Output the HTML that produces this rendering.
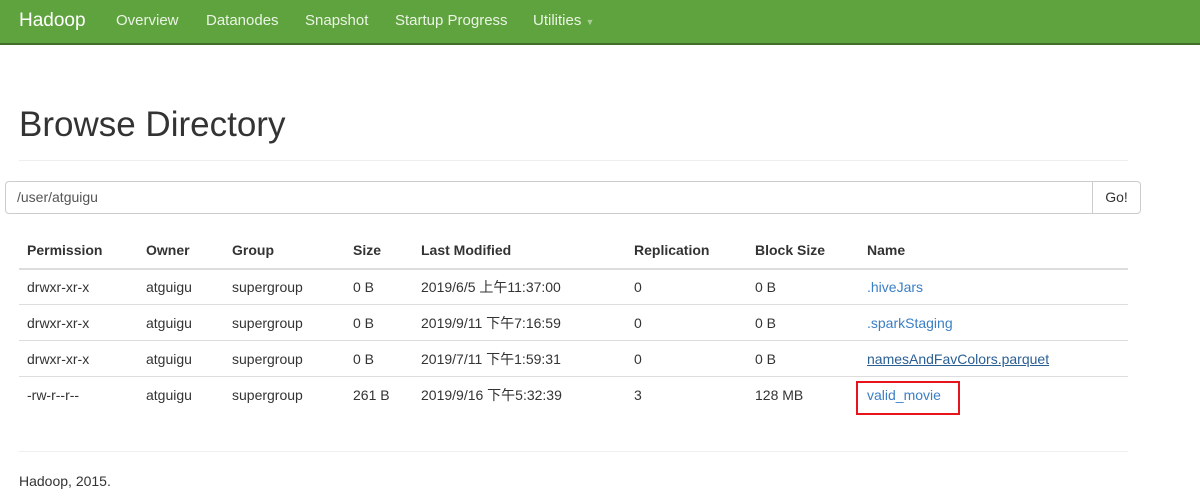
<!DOCTYPE html>
<html><head><meta charset="utf-8"><style>
*{box-sizing:border-box;margin:0;padding:0}
body{width:1200px;height:500px;background:#fff;font-family:"Liberation Sans","Noto Sans CJK SC",sans-serif;font-size:14px;color:#333;position:relative;overflow:hidden}
.nav{position:absolute;left:0;top:0;width:1200px;height:45px;background:#5fa33e;border-bottom:2px solid #3f6f2a}
.nav span{position:absolute;top:12px;color:#eaf4e4;font-size:15px}
.nav .brand{left:19px;top:10px;font-size:19px;color:#fff}
h1{position:absolute;left:19px;top:105px;font-size:35px;font-weight:normal;color:#333;line-height:40px}
.hr{position:absolute;height:1px;background:#eee}
.inp{position:absolute;left:5px;top:181px;width:1136px;height:33px;border:1px solid #ccc;border-radius:4px}
.inp .t{position:absolute;left:11px;top:7px;color:#555}
.inp .go{position:absolute;right:0;top:0;width:48px;height:31px;border-left:1px solid #ccc;text-align:center;line-height:31px;color:#333}
.c{position:absolute;white-space:nowrap;line-height:20px;height:20px}
.c span.z{display:inline-block;line-height:14px;vertical-align:baseline}
.b{font-weight:bold}
a{color:#3a7fc4;text-decoration:none}
.line{position:absolute;left:19px;width:1109px;height:1px;background:#ddd}
</style></head><body>
<div class="nav">
<span class="brand">Hadoop</span>
<span style="left:116px">Overview</span>
<span style="left:206px">Datanodes</span>
<span style="left:305px">Snapshot</span>
<span style="left:395px">Startup Progress</span>
<span style="left:533px">Utilities <span style="position:static;font-size:9px;color:#a9cc98">▼</span></span>
</div>
<h1>Browse Directory</h1>
<div class="hr" style="left:19px;top:160px;width:1109px"></div>
<div class="inp"><span class="t">/user/atguigu</span><span class="go">Go!</span></div>
<div class="c b" style="left:27px;top:240px">Permission</div>
<div class="c b" style="left:146px;top:240px">Owner</div>
<div class="c b" style="left:232px;top:240px">Group</div>
<div class="c b" style="left:353px;top:240px">Size</div>
<div class="c b" style="left:421px;top:240px">Last Modified</div>
<div class="c b" style="left:634px;top:240px">Replication</div>
<div class="c b" style="left:755px;top:240px">Block Size</div>
<div class="c b" style="left:867px;top:240px">Name</div>
<div class="line" style="top:268px;height:2px"></div>
<div class="line" style="top:304px"></div>
<div class="line" style="top:340px"></div>
<div class="line" style="top:376px"></div>

<div class="c" style="left:27px;top:277px">drwxr-xr-x</div><div class="c" style="left:146px;top:277px">atguigu</div><div class="c" style="left:232px;top:277px">supergroup</div><div class="c" style="left:353px;top:277px">0 B</div><div class="c" style="left:421px;top:277px">2019/6/5 <span class="z">上午</span>11:37:00</div><div class="c" style="left:634px;top:277px">0</div><div class="c" style="left:755px;top:277px">0 B</div><div class="c" style="left:867px;top:277px"><a>.hiveJars</a></div>

<div class="c" style="left:27px;top:313px">drwxr-xr-x</div><div class="c" style="left:146px;top:313px">atguigu</div><div class="c" style="left:232px;top:313px">supergroup</div><div class="c" style="left:353px;top:313px">0 B</div><div class="c" style="left:421px;top:313px">2019/9/11 <span class="z">下午</span>7:16:59</div><div class="c" style="left:634px;top:313px">0</div><div class="c" style="left:755px;top:313px">0 B</div><div class="c" style="left:867px;top:313px"><a>.sparkStaging</a></div>

<div class="c" style="left:27px;top:349px">drwxr-xr-x</div><div class="c" style="left:146px;top:349px">atguigu</div><div class="c" style="left:232px;top:349px">supergroup</div><div class="c" style="left:353px;top:349px">0 B</div><div class="c" style="left:421px;top:349px">2019/7/11 <span class="z">下午</span>1:59:31</div><div class="c" style="left:634px;top:349px">0</div><div class="c" style="left:755px;top:349px">0 B</div><div class="c" style="left:867px;top:349px"><a style="color:#2a5f94;text-decoration:underline">namesAndFavColors.parquet</a></div>

<div class="c" style="left:27px;top:385px">-rw-r--r--</div><div class="c" style="left:146px;top:385px">atguigu</div><div class="c" style="left:232px;top:385px">supergroup</div><div class="c" style="left:353px;top:385px">261 B</div><div class="c" style="left:421px;top:385px">2019/9/16 <span class="z">下午</span>5:32:39</div><div class="c" style="left:634px;top:385px">3</div><div class="c" style="left:755px;top:385px">128 MB</div><div class="c" style="left:867px;top:385px"><a>valid_movie</a></div>
<div style="position:absolute;left:856px;top:381px;width:104px;height:34px;border:2px solid #e8141b"></div>

<div class="hr" style="left:19px;top:451px;width:1109px"></div>
<div class="c" style="left:19px;top:471px">Hadoop, 2015.</div>
</body></html>
